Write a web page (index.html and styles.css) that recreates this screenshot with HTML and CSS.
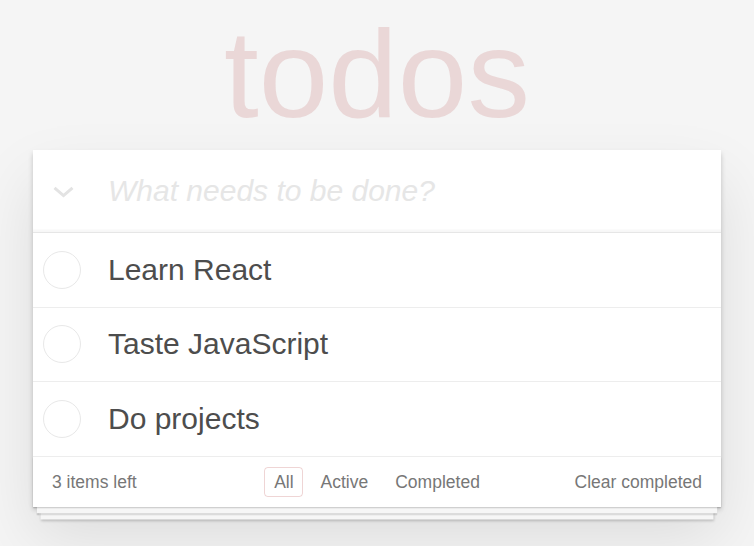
FILE: index.html
```html
<!DOCTYPE html>
<html lang="en">
<head>
<meta charset="utf-8">
<title>todos</title>
<link rel="stylesheet" href="styles.css">
</head>
<body>
<section class="todoapp">
  <h1 class="title">todos</h1>
  <div class="app">
    <header class="header">
      <label class="toggle-all">
        <svg width="21" height="12" viewBox="0 0 21 12"><polyline points="1.5,1.8 10.5,9.6 19.5,1.8" fill="none" stroke="#e3e3e3" stroke-width="3" stroke-linejoin="miter"/></svg>
      </label>
      <input class="new-todo" placeholder="What needs to be done?">
    </header>
    <ul class="todo-list">
      <li class="todo"><span class="check"></span><label class="todo-label">Learn React</label></li>
      <li class="todo"><span class="check"></span><label class="todo-label">Taste JavaScript</label></li>
      <li class="todo"><span class="check"></span><label class="todo-label">Do projects</label></li>
    </ul>
    <footer class="footer">
      <span class="todo-count">3 items left</span>
      <ul class="filters">
        <li><a class="filter selected">All</a></li>
        <li><a class="filter">Active</a></li>
        <li><a class="filter">Completed</a></li>
      </ul>
      <span class="clear-completed">Clear completed</span>
    </footer>
  </div>
</section>
</body>
</html>
```

FILE: styles.css
```css
html, body {
  margin: 0;
  padding: 0;
}
body {
  background: #f5f5f5;
  font-family: "Liberation Sans", Arial, Helvetica, sans-serif;
  font-size: 17.5px;
  line-height: 1.4em;
  color: #4d4d4d;
  padding-bottom: 50px;
}
.todoapp {
  width: 688px;
  margin: 0 auto;
}
.title {
  margin: 0;
  height: 150px;
  line-height: 148px;
  text-align: center;
  font-size: 125px;
  font-weight: 100;
  color: rgba(175, 47, 47, 0.15);
}
.app {
  position: relative;
  background: #fff;
  box-shadow: 0 2.5px 5px 0 rgba(0, 0, 0, 0.2), 0 31px 62px 0 rgba(0, 0, 0, 0.1);
}
.header {
  display: flex;
  align-items: center;
  height: 82px;
  box-shadow: inset 0 -2.5px 1px rgba(0, 0, 0, 0.03);
}
.toggle-all {
  width: 60px;
  display: flex;
  justify-content: center;
  padding-top: 2px;
}
.toggle-all svg { display: block; }
.new-todo {
  flex: 1;
  height: 82px;
  box-sizing: border-box;
  border: none;
  outline: none;
  background: transparent;
  padding: 0 20px 0 15px;
  font-family: inherit;
  font-size: 30px;
  color: #4d4d4d;
}
.new-todo::placeholder {
  font-style: italic;
  font-weight: 300;
  color: #e6e6e6;
}
.todo-list {
  list-style: none;
  margin: 0;
  padding: 0;
  border-top: 1px solid #e6e6e6;
}
.todo {
  display: flex;
  align-items: center;
  border-bottom: 1px solid #ededed;
}
.check {
  width: 36px;
  height: 36px;
  margin-left: 10px;
  border: 1px solid #e8e8e8;
  border-radius: 50%;
  flex: none;
}
.todo-label {
  padding: 18.75px 18px 18.75px 27px;
  font-size: 30px;
  line-height: 36px;
  color: #4d4d4d;
}
.footer {
  position: relative;
  display: grid;
  grid-template-columns: 1fr auto 1fr;
  align-items: center;
  height: 25px;
  padding: 13.5px 19px 11.5px;
  color: #777;
  font-size: 17.5px;
  line-height: 25px;
}
.footer::before {
  content: "";
  position: absolute;
  right: 0;
  bottom: 0;
  left: 0;
  height: 50px;
  overflow: hidden;
  box-shadow: 0 1.25px 1.25px rgba(0, 0, 0, 0.2),
    0 10px 0 -3.75px #f6f6f6,
    0 11.25px 1.25px -3.75px rgba(0, 0, 0, 0.2),
    0 20px 0 -7.5px #f6f6f6,
    0 21.25px 2.5px -7.5px rgba(0, 0, 0, 0.2);
}
.todo-count { justify-self: start; }
.filters {
  list-style: none;
  margin: 0;
  padding: 0;
  display: flex;
}
.filters li { display: inline; }
.filter {
  margin: 3.75px;
  padding: 3.75px 8.75px;
  border: 1px solid transparent;
  border-radius: 3.75px;
  color: inherit;
}
.filter.selected {
  border-color: rgba(175, 47, 47, 0.2);
}
.clear-completed { justify-self: end; }
```
